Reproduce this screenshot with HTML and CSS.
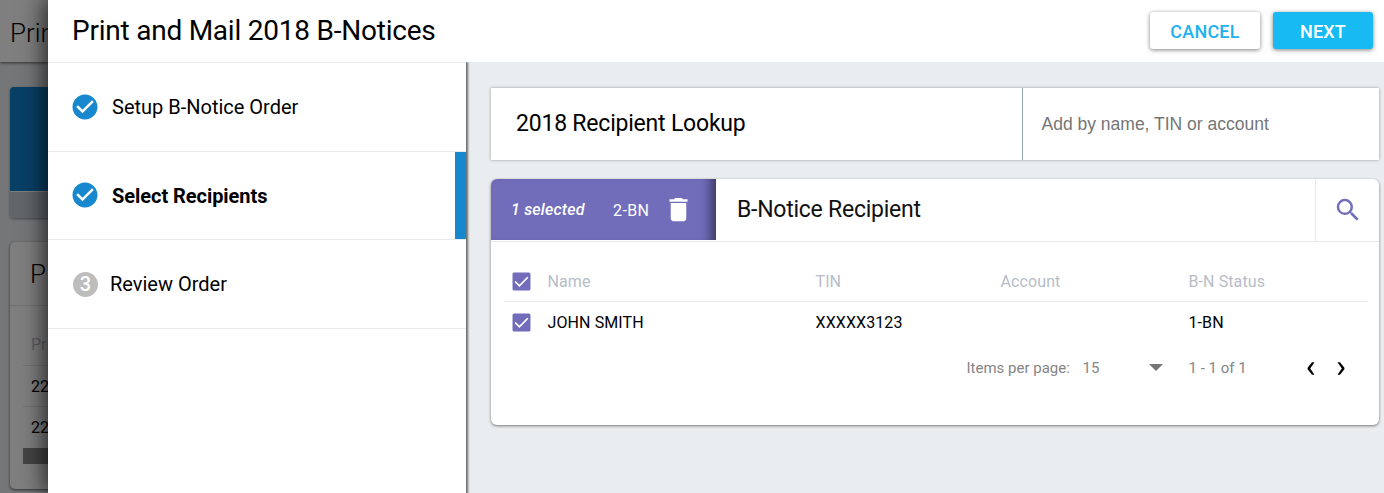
FILE: index.html
```html
<!DOCTYPE html>
<html lang="en">
<head>
<meta charset="utf-8">
<title>Print and Mail 2018 B-Notices</title>
<link rel="stylesheet" href="styles.css">
</head>
<body>
<div class="page">
  <header class="page-header">Prin</header>
  <div class="page-body">
    <div class="tile"><div class="tile-top"></div><div class="tile-foot"></div></div>
    <div class="page-card">
      <div class="page-card-title">P</div>
      <div class="page-table">
        <div class="page-row page-row-head">Pr</div>
        <div class="page-row">22</div>
        <div class="page-row page-row-last">22</div>
        <div class="scrollbar"></div>
      </div>
    </div>
  </div>
</div>
<div class="backdrop"></div>
<section class="dialog">
  <header class="dialog-header">
    <h1 class="dialog-title"><span>Print and Mail 2018 B-Notices</span></h1>
    <div class="actions">
      <button class="btn btn-cancel">CANCEL</button>
      <button class="btn btn-next">NEXT</button>
    </div>
  </header>
  <div class="dialog-body">
    <nav class="steps">
      <div class="step">
        <svg class="step-icon" viewBox="0 0 24 24"><path d="M12 2C6.48 2 2 6.48 2 12s4.48 10 10 10 10-4.48 10-10S17.520 2 12 2zm-2 15l-5-5 1.41-1.41L10 14.170l7.590-7.590L19 8l-9 9z"/></svg>
        <span class="step-label">Setup B-Notice Order</span>
      </div>
      <div class="step step-active">
        <svg class="step-icon" viewBox="0 0 24 24"><path d="M12 2C6.48 2 2 6.48 2 12s4.48 10 10 10 10-4.48 10-10S17.520 2 12 2zm-2 15l-5-5 1.41-1.41L10 14.170l7.590-7.590L19 8l-9 9z"/></svg>
        <span class="step-label">Select Recipients</span>
      </div>
      <div class="step step-todo">
        <span class="step-number">3</span>
        <span class="step-label">Review Order</span>
      </div>
    </nav>
    <main class="content">
      <div class="lookup">
        <div class="lookup-title"><span>2018 Recipient Lookup</span></div>
        <div class="lookup-field"><span>Add by name, TIN or account</span></div>
      </div>
      <div class="card">
        <div class="card-head">
          <div class="selection">
            <em class="selected-count">1 selected</em>
            <span class="selected-type">2-BN</span>
            <svg class="trash" viewBox="0 0 24 24"><path d="M6 19c0 1.100.9 2 2 2h8c1.100 0 2-.9 2-2V7H6v12zM19 4h-3.500l-1-1h-5l-1 1H5v2h14V4z"/></svg>
          </div>
          <div class="card-title"><span>B-Notice Recipient</span></div>
          <div class="search"><svg viewBox="0 0 24 24"><path d="M15.500 14h-.79l-.28-.27A6.471 6.471 0 0 0 16 9.500 6.500 6.500 0 1 0 9.500 16c1.610 0 3.090-.59 4.230-1.570l.27.28v.79l5 4.990L20.490 19l-4.990-5zm-6 0C7.010 14 5 11.990 5 9.500S7.010 5 9.500 5 14 7.010 14 9.500 11.990 14 9.500 14z"/></svg></div>
        </div>
        <div class="table">
          <div class="row row-head">
            <svg class="check" viewBox="0 0 18 18"><rect x=".5" y=".5" width="17" height="17" rx="1.500"/><path d="M3 9l4 4 8-8"/></svg>
            <span>Name</span><span>TIN</span><span>Account</span><span>B-N Status</span>
          </div>
          <div class="row">
            <svg class="check" viewBox="0 0 18 18"><rect x=".5" y=".5" width="17" height="17" rx="1.500"/><path d="M3 9l4 4 8-8"/></svg>
            <span class="name">JOHN SMITH</span><span>XXXXX3123</span><span></span><span>1-BN</span>
          </div>
        </div>
        <div class="pager">
          <span class="pager-label">Items per page:</span>
          <span class="pager-size">15<svg class="caret" viewBox="0 0 14 7"><path d="M0 0h14L7 7z"/></svg></span>
          <span class="pager-range">1 - 1 of 1</span>
          <svg class="chev" viewBox="0 0 8 13"><path d="M5 .2h2.500L3.200 6.500l4.300 6.300H5L.6 7.200V5.800z"/></svg>
          <svg class="chev" viewBox="0 0 8 13"><path d="M3 .2H.5l4.300 6.300-4.300 6.300H3l4.400-5.600V5.800z"/></svg>
        </div>
      </div>
    </main>
  </div>
</section>
</body>
</html>
```
FILE: styles.css
```css
* { box-sizing: border-box; }
body {
  margin: 0;
  height: 493px;
  overflow: hidden;
  position: relative;
  font-family: Roboto, "Liberation Sans", sans-serif;
  color: #000;
  background: #e9edf0;
}

/* Page under the dialog */
.page { width: 48px; height: 493px; overflow: hidden; }
.page-header {
  position: relative;
  height: 62px;
  padding: 16px 0 0 10px;
  background: #fff;
  font-size: 26px;
  font-weight: 300;
  line-height: 34px;
  box-shadow: 0 1px 3px rgba(0, 0, 0, .6);
}
.page-body { padding: 25px 0 0 10px; display: flex; flex-direction: column; gap: 24px; }
.tile,
.page-card { width: 120px; }
.tile { border-radius: 4px; overflow: hidden; box-shadow: 0 1px 3px rgba(0, 0, 0, .4); }
.tile-top { height: 105px; background: #1080cd; border-bottom: 1px solid #fff; }
.tile-foot { height: 26px; background: #c4ccd2; }
.page-card { height: 247px; border-radius: 5px; background: #fff; box-shadow: 0 1px 3px rgba(0, 0, 0, .6); }
.page-card-title {
  height: 64px;
  padding-left: 20px;
  border-bottom: 1px solid #e4e4e4;
  font-size: 26px;
  font-weight: 300;
  line-height: 64px;
}
.page-table { padding: 18px 0 0 13px; }
.page-row {
  height: 41px;
  padding-left: 8px;
  border-bottom: 1px solid #e4e4e4;
  font-size: 16px;
  line-height: 41px;
}
.page-row-head { height: 42px; color: #b7bdc6; }
.page-row-last { border: 0; }
.scrollbar { height: 16px; background: #888; }
.backdrop { position: absolute; inset: 0; background: rgba(0, 0, 0, .5); }

/* Dialog */
.dialog {
  position: absolute;
  inset: 0 0 0 48px;
  display: flex;
  flex-direction: column;
  background: #e9edf0;
  box-shadow: -2px 0 22px 2px rgba(0, 0, 0, .7);
}
.dialog-header {
  display: flex;
  justify-content: space-between;
  height: 62px;
  padding: 12px 11px 0 24px;
  background: #fff;
}
.dialog-title {
  margin: 0;
  font-size: 28px;
  font-weight: 400;
  line-height: 37px;
  letter-spacing: -.23px;
  white-space: nowrap;
}
.actions { display: flex; gap: 13px; }
.btn {
  width: 110px;
  height: 37px;
  padding: 2px 0 0;
  border: 0;
  border-radius: 3px;
  background: #fff;
  font: 500 18px Roboto, sans-serif;
  letter-spacing: .2px;
  color: #20b2ee;
  box-shadow: 0 1px 4px rgba(0, 0, 0, .5);
}
.btn-next { width: 100px; background: #17baf3; color: #fff; }
.dialog-body { flex: 1; display: flex; }
.steps {
  position: relative;
  width: 418px;
  border-top: 1px solid #e9ebed;
  background: #fff;
  box-shadow: 1px 1px 2px 1px rgba(0, 0, 0, .55);
  clip-path: inset(0 -5px 0 0);
}
.step {
  display: flex;
  align-items: center;
  height: 89px;
  padding-left: 22px;
  border-bottom: 1px solid #e8e9ea;
  font-size: 20px;
}
.step-icon { width: 30px; height: 30px; margin-right: 12px; fill: #1788cd; }
.step-active { position: relative; height: 88px; font-weight: 700; }
.step-active .step-icon { margin-top: -1px; }
.step-active .step-label { letter-spacing: -.05px; }
.step-active::after { content: ""; width: 11px; height: 87px; margin-left: auto; background: #1788cd; }
.step-todo { height: 89px; padding-left: 25px; }
.step-number {
  width: 25px;
  height: 25px;
  margin-right: 12px;
  border-radius: 50%;
  background: #bdbdbd;
  color: #fff;
  font-size: 20px;
  font-weight: 500;
  line-height: 25px;
  text-align: center;
}

/* Content */
.content { flex: 1; padding: 26px 5px 0 25px; }
.lookup { display: flex; height: 72px; background: #fff; box-shadow: 0 0 3px rgba(0, 0, 0, .35); }
.lookup-title {
  width: 532px;
  padding-left: 25px;
  border-right: 1px solid #93a3b0;
  font-size: 23px;
  line-height: 72px;
  letter-spacing: -.21px;
}
.lookup-field { padding-left: 18.500px; font: 17.5px/72px "Liberation Sans", sans-serif; color: #757575; }
.card {
  height: 246px;
  margin-top: 19px;
  border-radius: 6px;
  background: #fff;
  box-shadow: 0 1px 3px rgba(0, 0, 0, .5);
}
.card-head { display: flex; height: 63px; border-bottom: 1px solid #e8e9ea; }
.selection {
  display: flex;
  align-items: center;
  width: 225px;
  height: 61px;
  padding-left: 20px;
  border-radius: 6px 0 0 0;
  background: #716dbb;
  color: #fff;
  font-size: 16px;
  box-shadow: inset -13px 0 11px -8px rgba(0, 0, 0, .5);
}
.selected-count { width: 102px; font-weight: 500; letter-spacing: .2px; }
.selected-type { width: 50px; padding-top: 1px; letter-spacing: .4px; }
.trash { width: 31px; height: 31px; fill: #fff; }
.card-title { flex: 1; padding-left: 21px; font-size: 23px; line-height: 62px; letter-spacing: -.25px; color: #111; }
.search { display: flex; align-items: center; width: 64px; padding-left: 17px; border-left: 1px solid #e8e9ea; }
.search svg { width: 30px; height: 30px; fill: #716dbb; }
.table { padding: 18px 11px 0 13px; }
.row {
  display: grid;
  grid-template-columns: 43px 268px 185px 188px 1fr;
  align-items: center;
  height: 41px;
  padding-left: .5px;
  font-size: 16px;
  letter-spacing: .1px;
}
.row-head { height: 42px; padding-top: 1px; border-bottom: 1px solid #e8e9ea; color: #b7bdc8; }
.check { width: 19px; height: 19px; margin-left: 7px; fill: #716dbb; }
.check path { fill: none; stroke: #fff; stroke-width: 1.600; }
.pager { display: flex; align-items: center; height: 49px; padding-left: 475.500px; color: #858585; font-size: 15px; }
.pager-label { width: 116px; }
.pager-size { display: flex; align-items: center; justify-content: space-between; width: 80px; margin-right: 26px; }
.caret { width: 14px; height: 7px; fill: #757575; }
.pager-range { width: 118px; }
.chev { width: 8px; height: 13px; margin: 1px 22px 0 0; }
```
